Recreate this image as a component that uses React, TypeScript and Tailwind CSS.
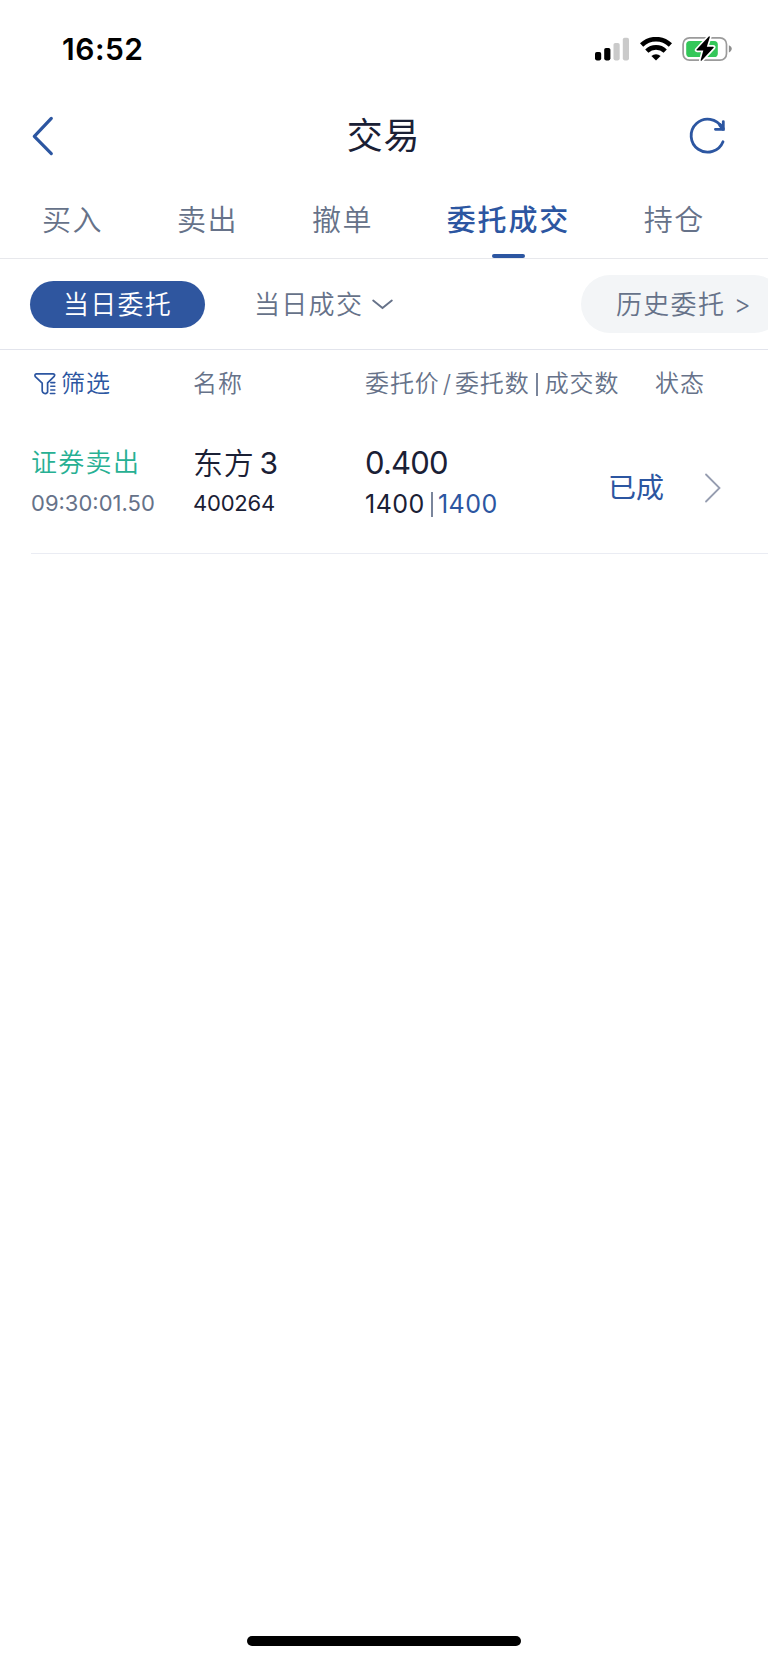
import React from "react";

function SignalIcon() {
  return (
    <svg width="36" height="24" viewBox="0 0 36 24">
      <rect x="1" y="15" width="6.2" height="8.4" rx="1.8" fill="#000" />
      <rect x="10.2" y="11" width="6.2" height="12.4" rx="1.8" fill="#000" />
      <rect x="19.5" y="6" width="6.2" height="17.4" rx="1.8" fill="#cacaca" />
      <rect x="28.8" y="0.8" width="6.2" height="22.6" rx="1.8" fill="#cacaca" />
    </svg>
  );
}

function WifiIcon() {
  return (
    <svg width="32" height="24" viewBox="0 0 32 24" fill="none" stroke="#000" strokeWidth="4.6">
      <path d="M1.6 8a20.6 20.6 0 0 1 28.8 0" />
      <path d="M6.8 14.1a13.2 13.2 0 0 1 18.4 0" />
      <path d="M16 23.4l-4.6-4.4a6.8 6.8 0 0 1 9.2 0z" fill="#000" stroke="none" />
    </svg>
  );
}

function BatteryIcon() {
  return (
    <svg width="50" height="26" viewBox="0 0 50 26">
      <rect x="1.1" y="1.8" width="43.4" height="22.4" rx="6.5" fill="#fff" stroke="#9b9b9b" strokeWidth="1.7" />
      <path d="M46.9 9.2c3.8 1.4 3.8 5.8 0 7.2z" fill="#8e8e8e" />
      <rect x="4.2" y="5" width="31.6" height="16" rx="3.6" fill="#34c759" />
      <path
        d="M26.8 0.6L14.6 13.6q-.6.9.5.9h6.2l-2.6 9.6q-.1 1.4 1 .5L31.6 11.8q.7-1-.5-1h-6.3L27.8 1.2q.1-1.3-1-.6z"
        fill="#000"
        stroke="#fff"
        strokeWidth="3.4"
        paintOrder="stroke"
        strokeLinejoin="round"
      />
    </svg>
  );
}

function BackIcon() {
  return (
    <svg width="24" height="42" viewBox="0 0 24 42" fill="none" stroke="#2c56a1" strokeWidth="3.2" strokeLinecap="round" strokeLinejoin="round">
      <path d="M21.3 3.4L4.3 21.4l17 17.2" />
    </svg>
  );
}

function RefreshIcon() {
  return (
    <svg width="40" height="40" viewBox="0 0 40 40" fill="none" stroke="#2c56a1" strokeWidth="2.8" strokeLinecap="round">
      <path d="M36 25.7A16.5 16.5 0 1 1 35 11.5" />
      <path d="M36.3 5.6v7.7h-7.9" />
      <path d="M33 8.8l3 4" strokeWidth="3.6" />
    </svg>
  );
}

function FilterIcon() {
  return (
    <svg width="24" height="24" viewBox="0 0 24 24" fill="none" stroke="#2c56a1" strokeWidth="1.7" strokeLinecap="round" strokeLinejoin="round">
      <path d="M14.2 20.6q-1.9 2.2-4.4-.2L9.2 19V11.2L2.3 4.6Q1.2 2.2 3.4 1.8H20.2Q22.500 2.2 21.2 4.4L14.6 10.8V20" />
      <path d="M17.800 10.600h4M17.800 14.300h4M17.800 18h4M17.400 21.500h4.400" strokeWidth="1.6" />
    </svg>
  );
}

function Tab({ label, active = false }: { label: string; active?: boolean }) {
  return (
    <div className="flex h-full flex-col items-center justify-end">
      <span
        className={
          active
            ? "mb-[17px] text-[29px] font-medium leading-[32px] tracking-[1.8px] text-[#2c56a1]"
            : "mb-[21px] text-[29px] leading-[32px] tracking-[1.6px]"
        }
      >
        {label}
      </span>
      {active && <span className="h-[4px] w-[33px] rounded-[2px] bg-[#2c56a1]" />}
    </div>
  );
}

export default function App() {
  return (
    <div className="flex h-[1663px] w-[768px] flex-col overflow-hidden whitespace-nowrap bg-white font-['Inter','Noto_Sans_CJK_SC',sans-serif] font-[350] text-[#667289]">
      <div className="flex h-[98px] items-center justify-between pl-[62px] pr-[36px]">
        <span className="mb-[1px] text-[30px] font-semibold leading-[32px] tracking-[0.5px] text-black">16:52</span>
        <div className="flex items-center">
          <SignalIcon />
          <div className="ml-[10px]">
            <WifiIcon />
          </div>
          <div className="ml-[10px]">
            <BatteryIcon />
          </div>
        </div>
      </div>

      <header className="flex h-[76px] items-center justify-between pl-[30px] pr-[41px]">
        <div className="w-[44px]">
          <BackIcon />
        </div>
        <h1 className="mb-[1px] ml-[6px] text-[36px] font-normal leading-[40px] tracking-[0.8px] text-[#1a2035]">交易</h1>
        <RefreshIcon />
      </header>

      <nav className="flex h-[85px] justify-between border-b border-[#e7e8ec] pl-[42px] pr-[63px]">
        <Tab label="买入" />
        <Tab label="卖出" />
        <Tab label="撤单" />
        <Tab label="委托成交" active />
        <Tab label="持仓" />
      </nav>

      <div className="flex h-[91px] items-center border-b border-[#e2e4ec] pl-[30px] text-[26px] leading-[30px] tracking-[1.3px]">
        <div className="flex h-[47px] w-[175px] shrink-0 items-center justify-center rounded-full bg-[#2f569f] pt-[2px] text-white">
          当日委托
        </div>
        <div className="ml-[49px] flex shrink-0 items-center pt-[2px]">
          当日成交
          <svg className="ml-[9px]" width="21" height="12" viewBox="0 0 21 12" fill="none" stroke="#667289" strokeWidth="1.9" strokeLinecap="round">
            <path d="M1.2 1.5L10.5 9l9.3-7.5" />
          </svg>
        </div>
        <div className="ml-auto mr-[-15px] flex h-[58px] w-[202px] shrink-0 items-center rounded-full bg-[#f3f5f7] pl-[35px] pt-[2px]">
          历史委托 &gt;
        </div>
      </div>

      <div className="flex h-[66px] items-center pl-[33px] pt-[2px] text-[24px] leading-[28px] tracking-[0.9px]">
        <div className="flex w-[160px] items-center text-[#2c56a1]">
          <FilterIcon />
          <span className="ml-[4px]">筛选</span>
        </div>
        <span className="w-[172px]">名称</span>
        <div className="flex w-[290px] items-center">
          <span>委托价</span>
          <span className="mx-[3px]">/</span>
          <span>委托数</span>
          <span className="ml-[6px] mr-[7px] mt-[1px] h-[23px] w-[2px] bg-[#7a859b]" />
          <span>成交数</span>
        </div>
        <span>状态</span>
      </div>

      <div className="ml-[31px] flex h-[138px] border-b border-[#eaecf3] pt-[30px] text-[#1a2035]">
        <div className="flex w-[162px] flex-col">
          <span className="text-[26px] leading-[34px] tracking-[1.3px] text-[#27b093]">证券卖出</span>
          <span className="mt-[7px] text-[22px] font-normal leading-[32px] text-[#667289]">09:30:01.50</span>
        </div>
        <div className="flex w-[172px] flex-col">
          <span className="text-[30px] leading-[34px] tracking-[0.7px]">
            东方<span className="ml-[5px] font-normal">3</span>
          </span>
          <span className="mt-[7px] text-[22px] font-normal leading-[32px] tracking-[-0.2px]">400264</span>
        </div>
        <div className="flex w-[243px] flex-col">
          <span className="text-[31px] font-normal leading-[34px] tracking-[-0.8px]">0.400</span>
          <div className="mt-[8px] flex items-center text-[25px] font-normal leading-[32px] tracking-[0.5px]">
            <span>1400</span>
            <span className="ml-[6px] mr-[5px] h-[25px] w-[2px] bg-[#7a859b]" />
            <span className="text-[#2c56a1]">1400</span>
          </div>
        </div>
        <div className="flex h-[83px] items-center">
          <span className="w-[96px] pt-[1px] text-[28px] font-normal leading-[34px] text-[#2c56a1]">已成</span>
          <svg width="18" height="30" viewBox="0 0 18 30" fill="none" stroke="#969db0" strokeWidth="1.8" strokeLinecap="round">
            <path d="M2 1.5l13.5 13.5L2 28.5" />
          </svg>
        </div>
      </div>

      <div className="mt-auto flex justify-center pb-[17px]">
        <div className="h-[10px] w-[274px] rounded-full bg-black" />
      </div>
    </div>
  );
}
